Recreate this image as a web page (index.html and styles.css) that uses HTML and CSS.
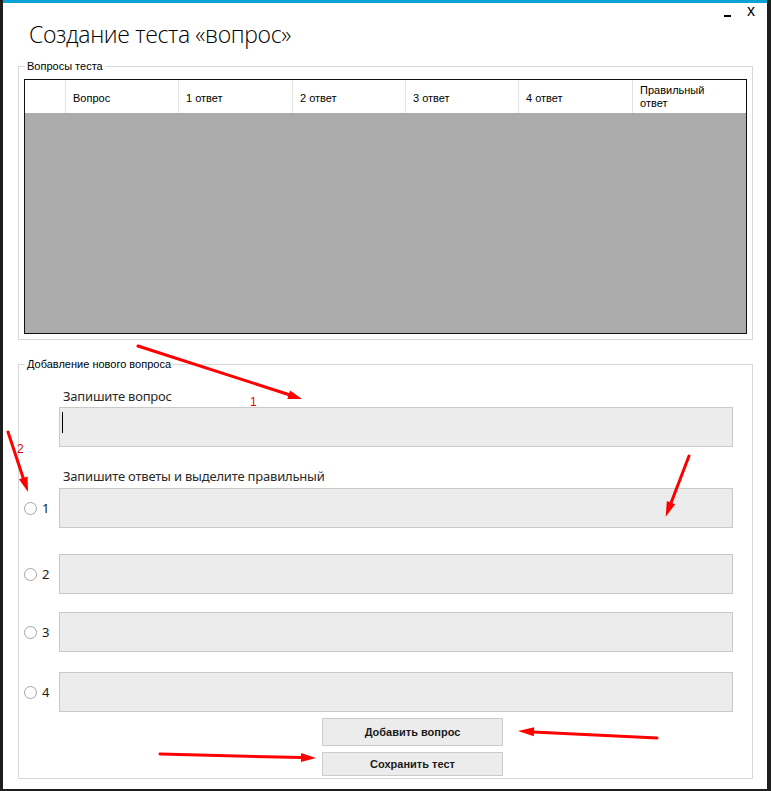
FILE: index.html
```html
<!DOCTYPE html>
<html lang="ru">
<head>
<meta charset="utf-8">
<title>Создание теста «вопрос»</title>
<link rel="stylesheet" href="styles.css">
</head>
<body>
<div class="window">
  <div class="titlebar">
    <h1 class="title">Создание теста «вопрос»</h1>
    <div class="controls"><span class="min"></span><span class="close">x</span></div>
  </div>

  <fieldset class="group group-questions">
    <legend>Вопросы теста</legend>
    <div class="grid">
      <div class="grid-head">
        <div class="cell"></div>
        <div class="cell">Вопрос</div>
        <div class="cell">1 ответ</div>
        <div class="cell">2 ответ</div>
        <div class="cell">3 ответ</div>
        <div class="cell">4 ответ</div>
        <div class="cell cell-last cell-wrap">Правильный<br>ответ</div>
      </div>
      <div class="grid-body"></div>
    </div>
  </fieldset>

  <fieldset class="group group-add">
    <legend>Добавление нового вопроса</legend>
    <div class="prompt prompt-question">Запишите вопрос</div>
    <div class="textbox textbox-question"><span class="caret"></span></div>
    <div class="prompt prompt-answers">Запишите ответы и выделите правильный</div>
    <div class="answer answer-1"><span class="radio"></span><span class="num">1</span><div class="textbox"></div></div>
    <div class="answer answer-2"><span class="radio"></span><span class="num">2</span><div class="textbox"></div></div>
    <div class="answer answer-3"><span class="radio"></span><span class="num">3</span><div class="textbox"></div></div>
    <div class="answer answer-4"><span class="radio"></span><span class="num">4</span><div class="textbox"></div></div>
    <button class="btn btn-add" type="button">Добавить вопрос</button>
    <button class="btn btn-save" type="button">Сохранить тест</button>
  </fieldset>
</div>

<svg class="annotations" width="771" height="791" viewBox="0 0 771 791">
  <g class="anno-line">
    <line x1="138" y1="346" x2="290" y2="395"/>
    <line x1="8" y1="432" x2="23.5" y2="479"/>
    <line x1="689" y1="456" x2="671" y2="503"/>
    <line x1="657" y1="738" x2="533" y2="732"/>
    <line x1="160" y1="754" x2="302" y2="757.6"/>
  </g>
  <g class="anno-head">
    <polygon points="302,399 287.3,399 290.1,390.4"/>
    <polygon points="28,492 27.6,476.4 19,479.2"/>
    <polygon points="665.7,516.7 675.2,504.3 666.8,501.1"/>
    <polygon points="518,731 534.2,727.3 533.8,736.3"/>
    <polygon points="316,758 300.9,762.1 301.1,753.1"/>
  </g>
  <text class="anno-num" x="250" y="406">1</text>
  <text class="anno-num" x="17" y="453">2</text>
</svg>
</body>
</html>
```

FILE: styles.css
```css
html, body {
  margin: 0;
  padding: 0;
}

body {
  position: relative;
  width: 771px;
  height: 791px;
  overflow: hidden;
  background: #1e1e1e;
  font-family: "Liberation Sans", Arial, sans-serif;
}

.window {
  margin-left: 3px;
  width: 764px;
  height: 786px;
  border-top: 3px solid #0ba3d6;
  background: #ffffff;
}

.titlebar {
  display: flex;
  align-items: flex-start;
  height: 57px;
}

.title {
  margin: 16px 0 0 26px;
  font-family: "Open Sans", sans-serif;
  font-weight: 300;
  font-size: 23px;
  line-height: 30px;
  letter-spacing: -0.35px;
  color: #000;
  white-space: nowrap;
}

.controls {
  display: flex;
  align-items: flex-start;
  margin-left: auto;
  margin-right: 12px;
}

.min {
  width: 7px;
  height: 2px;
  margin-top: 12px;
  background: #000;
}

.close {
  margin-left: 16px;
  font-family: "Liberation Sans", sans-serif;
  font-size: 16px;
  line-height: 16px;
  color: #000;
}

.group {
  box-sizing: border-box;
  width: 735px;
  min-width: 0;
  margin: 0 0 0 15px;
  border: 1px solid #d8d8d8;
}

.group legend {
  margin-left: 1px;
  padding: 0 2px;
  font-family: "Liberation Sans", sans-serif;
  font-size: 11px;
  line-height: 13px;
  color: #000;
}

.group-questions {
  padding: 6px 5px 5px;
}

.grid {
  box-sizing: border-box;
  height: 255px;
  border: 1px solid #101010;
  background: #ababab;
  display: flex;
  flex-direction: column;
}

.grid-head {
  display: grid;
  grid-template-columns: 41px 113px 114px 113px 113px 114px 1fr;
  height: 33px;
  background: #ffffff;
}

.cell {
  box-sizing: border-box;
  display: flex;
  align-items: center;
  padding: 3px 0 0 7px;
  border-right: 1px solid #e3e3e3;
  font-family: "Liberation Sans", sans-serif;
  font-size: 11px;
  line-height: 13px;
  color: #000;
}

.cell-wrap {
  padding-top: 0;
}

.cell-last {
  border-right: 0;
}

.grid-body {
  flex: 1;
}

.group-add {
  margin-top: 18px;
  padding: 0 5px 2px;
}

.prompt {
  margin-left: 39px;
  font-family: "Noto Sans", sans-serif;
  font-size: 13px;
  line-height: 18px;
  letter-spacing: -0.2px;
  color: #2a2a2a;
}

.prompt-question {
  margin-top: 16px;
}

.prompt-answers {
  margin-top: 20px;
}

.textbox {
  box-sizing: border-box;
  width: 674px;
  height: 40px;
  background: #ececec;
  border: 1px solid #c9c9c9;
}

.textbox-question {
  display: flex;
  margin: 2px 0 0 35px;
  padding: 4px 2px;
}

.caret {
  width: 1px;
  height: 21px;
  background: #000;
}

.answer {
  display: flex;
  align-items: center;
}

.answer-1 { margin-top: 3px; }
.answer-2 { margin-top: 26px; }
.answer-3 { margin-top: 18px; }
.answer-4 { margin-top: 20px; }

.radio {
  flex: none;
  box-sizing: border-box;
  width: 13px;
  height: 13px;
  border: 1px solid #a3a3a3;
  border-radius: 50%;
  background: #fff;
}

.num {
  flex: none;
  width: 17px;
  margin-left: 5px;
  font-family: "Noto Sans", sans-serif;
  font-size: 13px;
  line-height: 18px;
  color: #1a1a1a;
}

.btn {
  display: block;
  box-sizing: border-box;
  width: 181px;
  margin-left: 298px;
  padding: 0;
  background: #ececec;
  border: 1px solid #cbcbcb;
  font-family: "Liberation Sans", sans-serif;
  font-weight: bold;
  font-size: 11px;
  color: #1a1a1a;
}

.btn-add {
  margin-top: 6px;
  height: 28px;
}

.btn-save {
  margin-top: 6px;
  height: 24px;
}

.annotations {
  position: absolute;
  left: 0;
  top: 0;
  pointer-events: none;
}

.anno-line line {
  stroke: #ff0000;
  stroke-width: 3;
  stroke-linecap: round;
}

.anno-head polygon {
  fill: #ff0000;
}

.anno-num {
  fill: #e00000;
  font-family: "Liberation Sans", sans-serif;
  font-size: 12px;
}
```
